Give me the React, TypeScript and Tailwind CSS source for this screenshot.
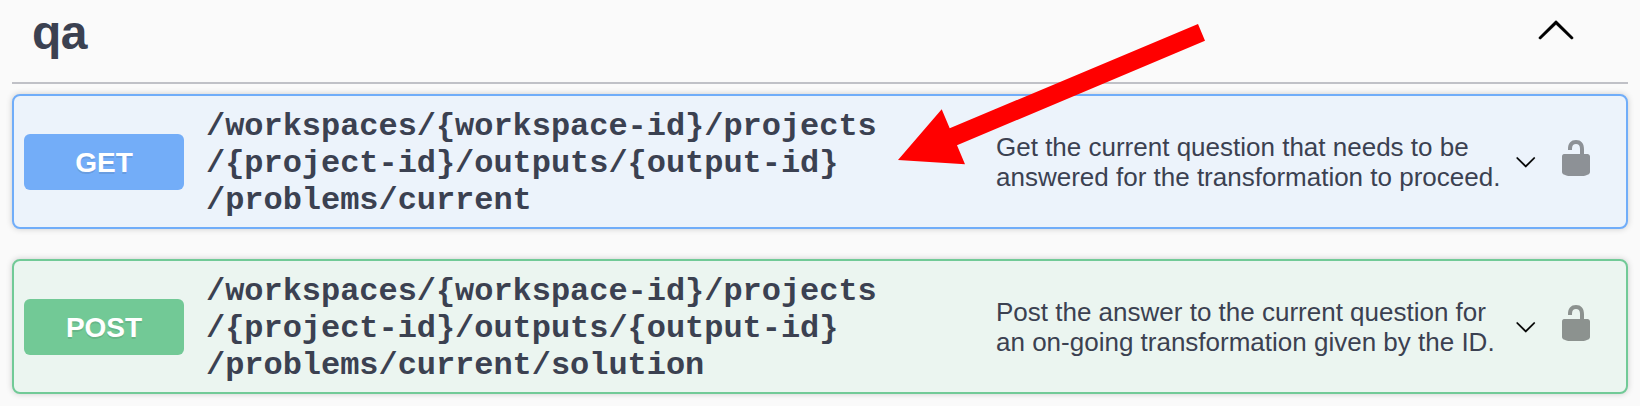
type Operation = {
  method: string;
  path: string[];
  summary: string[];
  card: string;
  badge: string;
};

const operations: Operation[] = [
  {
    method: "GET",
    path: ["/workspaces/{workspace-id}/projects", "/{project-id}/outputs/{output-id}", "/problems/current"],
    summary: ["Get the current question that needs to be", "answered for the transformation to proceed."],
    card: "border-[#70adf9] bg-[#ecf3fb]",
    badge: "bg-[#73adf8]",
  },
  {
    method: "POST",
    path: ["/workspaces/{workspace-id}/projects", "/{project-id}/outputs/{output-id}", "/problems/current/solution"],
    summary: ["Post the answer to the current question for", "an on-going transformation given by the ID."],
    card: "border-[#71ca97] bg-[#ebf5f0]",
    badge: "bg-[#72c996]",
  },
];

function ChevronUp() {
  return (
    <svg viewBox="0 0 20 20" className="mt-[9px] mr-[52px] size-10 shrink-0" fill="#000" stroke="#000" strokeWidth="0.15">
      <path d="M17.418 14.908c.272.268.709.268.979 0s.271-.701 0-.969l-7.908-7.83c-.27-.268-.707-.268-.979 0l-7.908 7.83c-.27.268-.27.701 0 .969.271.268.709.268.979 0L10 7.767l7.418 7.141z" />
    </svg>
  );
}

function ChevronDown() {
  return (
    <svg viewBox="0 0 20 20" className="h-[21.5px] w-[21.5px] shrink-0" fill="#000" stroke="#000" strokeWidth="0.25">
      <path d="M17.418 6.109c.272-.268.709-.268.979 0s.271.701 0 .969l-7.908 7.83c-.27.268-.707.268-.979 0l-7.908-7.83c-.27-.268-.27-.701 0-.969.271-.268.709-.268.979 0L10 13.25l7.418-7.141z" />
    </svg>
  );
}

function Unlocked() {
  return (
    <svg viewBox="0 0 20 20" className="size-10 shrink-0 opacity-40" fill="#000">
      <path d="M15.8 8H14V5.6C14 2.703 12.665 1 10 1 7.334 1 6 2.703 6 5.6V6h2v-.801C8 3.754 8.797 3 10 3c1.203 0 2 .754 2 2.199V8H4c-.553 0-1 .646-1 1.199V17c0 .549.428 1.139.951 1.307l1.197.387C5.672 18.861 6.55 19 7.1 19h5.8c.549 0 1.428-.139 1.951-.307l1.196-.387c.524-.167.953-.757.953-1.306V9.199C17 8.646 16.352 8 15.8 8z" />
    </svg>
  );
}

function OperationRow({ op }: { op: Operation }) {
  return (
    <div
      className={`flex h-[135px] items-center rounded-lg border-2 pl-[10px] shadow-[0_0_6px_rgba(0,0,0,0.19)] ${op.card}`}
    >
      <div
        className={`mt-px flex h-14 w-40 shrink-0 items-center justify-center rounded-md pt-px text-[28px] font-bold text-white [text-shadow:0_2px_0_rgba(0,0,0,0.1)] ${op.badge}`}
      >
        {op.method}
      </div>
      <div className="ml-5 w-[792px] shrink-0 pt-[3px] pl-[2px] font-['Liberation_Mono',monospace] text-[32px] leading-[37px] font-bold tracking-[-0.04px] whitespace-nowrap">
        {op.path.map((line) => (
          <div key={line}>{line}</div>
        ))}
      </div>
      <div className="w-[519px] shrink-0 text-[26px] leading-[30px] whitespace-nowrap">
        {op.summary.map((line) => (
          <div key={line}>{line}</div>
        ))}
      </div>
      <ChevronDown />
      <div className="ml-[19.5px] flex pb-[7px]">
        <Unlocked />
      </div>
    </div>
  );
}

export default function App() {
  return (
    <div className="relative h-[406px] w-[1640px] overflow-hidden bg-[#fafafa] px-3 font-['Liberation_Sans',Arial,sans-serif] text-[#3b4151]">
      <div className="flex h-[84px] items-start justify-between border-b-2 border-[#c0c1c7] pl-5">
        <h3 className="mt-[5px] text-[48px] leading-[55px] font-bold tracking-[-0.5px]">qa</h3>
        <ChevronUp />
      </div>
      <div className="mt-[10px] flex flex-col gap-[30px]">
        {operations.map((op) => (
          <OperationRow key={op.method} op={op} />
        ))}
      </div>
      <svg viewBox="0 0 310 144" className="absolute top-[22px] left-[897px] h-[144px] w-[310px]" fill="#ff0000">
        <path d="M1 138 44.7 87.3 52.7 106.3 301 2 308 18.7 60 123.3 68 142.3Z" />
      </svg>
    </div>
  );
}
